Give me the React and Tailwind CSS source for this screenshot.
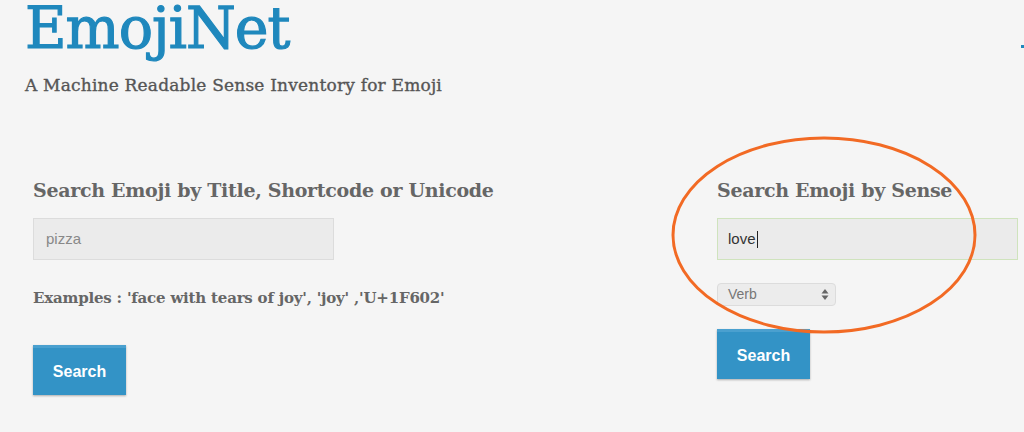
export default function App() {
    return (
        <div className="relative w-[1024px] h-[432px] overflow-hidden bg-[#f5f5f5] text-[#666]" style={{ fontFamily: '"DejaVu Serif", serif' }}>
            <div className="pl-[25px]">
                <h1 className="text-[57px] leading-[64px] -mt-[4px] text-[#1f88bd] tracking-[-1px] [-webkit-text-stroke:1.2px_#1f88bd]">EmojiNet</h1>
                <p className="mt-[17px] text-[17px] leading-none text-[#555] tracking-[0.2px] [-webkit-text-stroke:0.35px_#555]">A Machine Readable Sense Inventory for Emoji</p>
            </div>

            <div className="flex mt-[87px]">
                <div className="w-[717px] pl-[33px]">
                    <h2 className="text-[19px] font-bold leading-none tracking-[-0.3px]">Search Emoji by Title, Shortcode or Unicode</h2>
                    <div className="mt-[18px] w-[301px] h-[42px] bg-[#ebebeb] border border-[#dcdcdc] flex items-center pl-[12px] text-[15px] text-[#888]" style={{ fontFamily: '"Liberation Sans", sans-serif' }}>
                        pizza
                    </div>
                    <p className="mt-[31px] text-[15px] font-bold leading-none tracking-[-0.2px]">Examples : 'face with tears of joy', 'joy' ,'U+1F602'</p>
                    <button className="mt-[39px] w-[93px] h-[50px] bg-[#3393c6] border-t-[3px] border-[#4aa0cf] shadow-[0_1px_2px_rgba(0,0,0,0.3)] text-white font-bold text-[16px]" style={{ fontFamily: '"Liberation Sans", sans-serif' }}>
                        Search
                    </button>
                </div>

                <div className="flex-1">
                    <h2 className="text-[19px] font-bold leading-none tracking-[-0.3px]">Search Emoji by Sense</h2>
                    <div className="mt-[18px] w-[301px] h-[42px] bg-[#ebebeb] border border-[#cfe3bd] flex items-center pl-[10px] text-[15px] text-[#333]" style={{ fontFamily: '"Liberation Sans", sans-serif' }}>
                        love<span className="inline-block w-[1px] h-[17px] bg-[#222] ml-[1px]"></span>
                    </div>
                    <div className="mt-[23px] w-[119px] h-[23px] rounded-[4px] bg-[#ececec] border border-[#dcdcdc] flex items-center justify-between pl-[10px] pr-[6px] text-[14px] text-[#777]" style={{ fontFamily: '"Liberation Sans", sans-serif' }}>
                        <span>Verb</span>
                        <svg width="8" height="13" viewBox="0 0 8 13">
                            <path d="M4 1 L7.5 5.5 H0.5 Z" fill="#666" />
                            <path d="M4 12 L7.5 7.5 H0.5 Z" fill="#666" />
                        </svg>
                    </div>
                    <button className="mt-[23px] w-[93px] h-[50px] bg-[#3393c6] border-t-[3px] border-[#4aa0cf] shadow-[0_1px_2px_rgba(0,0,0,0.3)] text-white font-bold text-[16px]" style={{ fontFamily: '"Liberation Sans", sans-serif' }}>
                        Search
                    </button>
                </div>
            </div>

            {/* annotation ring */}
            <svg className="absolute left-0 top-0 pointer-events-none" width="1024" height="432">
                <ellipse cx="824" cy="235" rx="151" ry="97" fill="none" stroke="#f26a24" strokeWidth="3" />
            </svg>
            <div className="absolute left-[1021px] top-[45px] w-[3px] h-[3px] bg-[#1f88bd]"></div>
        </div>
    );
}
